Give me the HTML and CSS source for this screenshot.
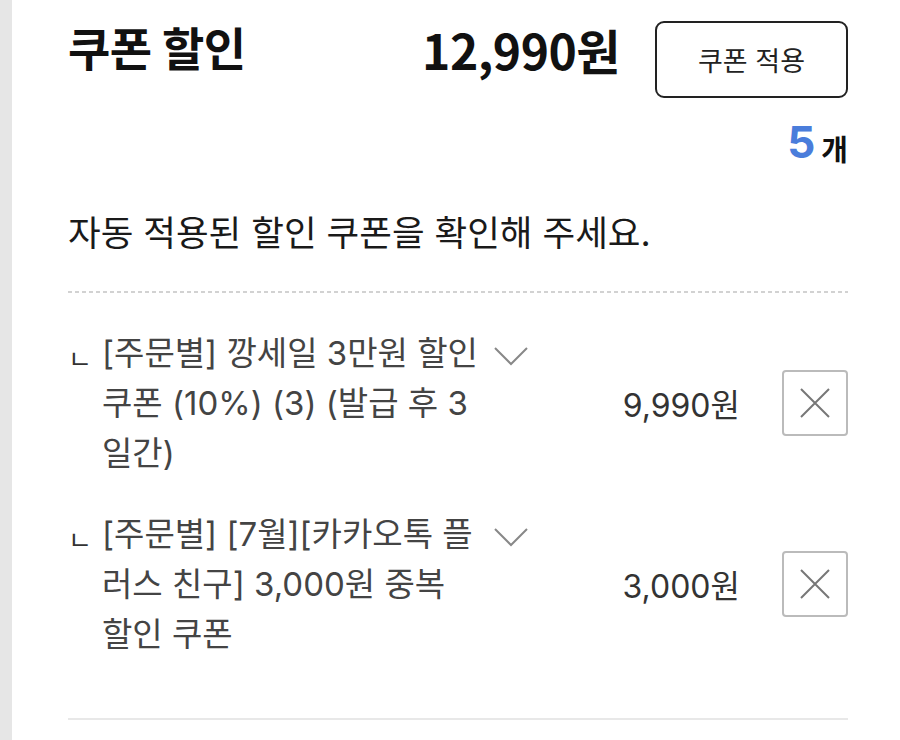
FILE: index.html
```html
<!DOCTYPE html>
<html lang="ko">

<head>
  <meta charset="UTF-8">
  <meta name="viewport" content="width=device-width, initial-scale=1.0">
  <title>쿠폰 할인</title>
  <link rel="stylesheet" href="styles.css">
</head>

<body>
  <div class="side"></div>
  <main class="panel">
    <div class="head">
      <h2 class="title">쿠폰 할인</h2>
      <div class="total">12,990원</div>
      <button class="btn-apply" type="button">쿠폰 적용</button>
    </div>

    <div class="count"><span class="count-num">5</span><span class="count-unit">개</span></div>

    <p class="desc">자동 적용된 할인 쿠폰을 확인해 주세요.</p>

    <ul class="coupons">
      <li class="coupon">
        <span class="mark">ㄴ</span>
        <span class="name">[주문별] 깡세일 3만원 할인 쿠폰 (10%) (3) (발급 후 3 일간)</span>
        <svg class="chev" width="34" height="20" viewBox="0 0 34 20">
          <polyline points="1,2 17,18 33,2" fill="none" stroke="#888" stroke-width="2" />
        </svg>
        <span class="price">9,990원</span>
        <button class="btn-del" type="button" aria-label="삭제">
          <svg width="32" height="32" viewBox="0 0 32 32">
            <path d="M2 2 L30 30 M30 2 L2 30" stroke="#777" stroke-width="2" />
          </svg>
        </button>
      </li>
      <li class="coupon">
        <span class="mark">ㄴ</span>
        <span class="name">[주문별] [7월][카카오톡 플러스 친구] 3,000원 중복 할인 쿠폰</span>
        <svg class="chev" width="34" height="20" viewBox="0 0 34 20">
          <polyline points="1,2 17,18 33,2" fill="none" stroke="#888" stroke-width="2" />
        </svg>
        <span class="price">3,000원</span>
        <button class="btn-del" type="button" aria-label="삭제">
          <svg width="32" height="32" viewBox="0 0 32 32">
            <path d="M2 2 L30 30 M30 2 L2 30" stroke="#777" stroke-width="2" />
          </svg>
        </button>
      </li>
    </ul>
  </main>
</body>

</html>
```

FILE: styles.css
```css
html,
body {
  height: 100%;
}

body {
  margin: 0;
  display: flex;
  background: #fff;
  font-family: Inter, "Noto Sans CJK KR", sans-serif;
  color: #1a1a1a;
}

.side {
  width: 12px;
  flex: none;
  background: #e6e6e6;
}

.panel {
  flex: 1;
  padding: 0 52px 0 56px;
}

/* 상단 제목 / 금액 / 버튼 */
.head {
  display: flex;
  align-items: flex-start;
  padding-top: 21px;
}

.title {
  flex: 1;
  margin: 5px 0 0;
  font-size: 46px;
  line-height: 1;
  font-weight: 700;
  letter-spacing: -0.5px;
  color: #111;
}

.total {
  margin-top: 4px;
  font-family: "Noto Sans CJK KR", sans-serif;
  font-size: 48px;
  line-height: 1;
  font-weight: 700;
  letter-spacing: -0.5px;
  color: #111;
}

.btn-apply {
  margin-left: 35px;
  width: 193px;
  height: 77px;
  border: 2px solid #222;
  border-radius: 9px;
  background: #fff;
  font-family: inherit;
  font-size: 27px;
  color: #222;
  padding: 0;
}

.count {
  margin-top: 22px;
  text-align: right;
  line-height: 1;
}

.count-num {
  font-size: 44px;
  font-weight: 700;
  color: #4a7ddb;
}

.count-unit {
  margin-left: 6px;
  font-size: 29px;
  font-weight: 700;
  color: #111;
  position: relative;
  top: 3px;
}

.desc {
  margin: 52px 0 0;
  font-size: 35.5px;
  line-height: 1;
  color: #1a1a1a;
}

/* 쿠폰 목록 */
.coupons {
  list-style: none;
  margin: 39px 0 0;
  padding: 37px 0 59px;
  background: repeating-linear-gradient(90deg, #d2d2d2 0 4px, transparent 4px 7px) top / 100% 2px no-repeat;
  border-bottom: 2px solid #e8e8e8;
}

.coupon {
  display: grid;
  grid-template-columns: 34px 377px 51px 1fr 42px 66px;
  align-items: center;
}

.coupon + .coupon {
  margin-top: 31px;
}

.mark {
  align-self: start;
  margin-top: 19px;
  font-size: 26px;
  line-height: 1;
  color: #333;
}

.name {
  font-size: 33px;
  line-height: 50px;
  color: #444;
}

.chev {
  align-self: start;
  margin: 18px 0 0 15px;
}

.price {
  text-align: right;
  font-size: 32px;
  color: #333;
}

.btn-del {
  grid-column: 6;
  width: 66px;
  height: 66px;
  padding: 0;
  border: 2px solid #bbb;
  border-radius: 4px;
  background: #fff;
  display: flex;
  align-items: center;
  justify-content: center;
}
```
